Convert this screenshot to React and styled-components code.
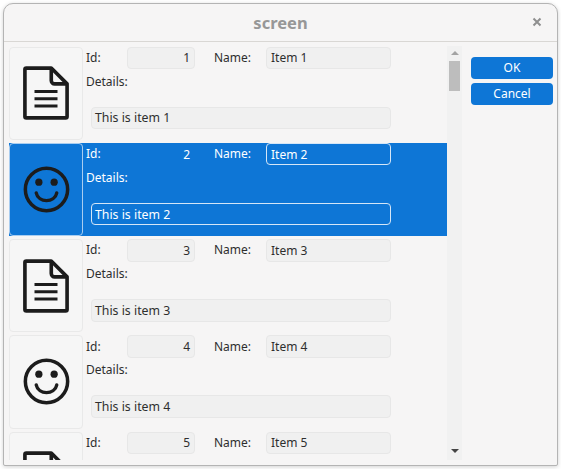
import styled, { createGlobalStyle } from "styled-components";

const GlobalStyle = createGlobalStyle`
  html, body {
    margin: 0;
    background: #ffffff;
  }
  body {
    font-family: "Noto Sans", sans-serif;
    font-size: 12px;
    color: #2e2e2e;
  }
`;

const Page = styled.div`
  width: 561px;
  height: 469px;
  padding: 3px;
  box-sizing: border-box;
  overflow: hidden;
`;

const Win = styled.div`
  width: 555px;
  height: 463px;
  box-sizing: border-box;
  border: 1px solid #b4b4b4;
  border-radius: 10px 10px 2px 2px;
  background: #f6f5f5;
  box-shadow: 0 1px 4px rgba(0, 0, 0, 0.18);
  display: flex;
  flex-direction: column;
  overflow: hidden;
`;

const TitleBar = styled.div`
  height: 37px;
  flex: none;
  position: relative;
  display: flex;
  align-items: center;
  justify-content: center;
  border-bottom: 1px solid #d9d7d4;
`;

const Title = styled.span`
  font-size: 16.5px;
  font-weight: 700;
  color: #979797;
`;

const CloseBtn = styled.svg`
  position: absolute;
  right: 15px;
  top: 13px;
  width: 10px;
  height: 10px;
`;

const Body = styled.div`
  flex: 1;
  min-height: 0;
  display: flex;
  padding: 4px 0 5px 5px;
`;

const List = styled.div`
  width: 438px;
  flex: none;
  overflow: hidden;
  padding-top: 0.5px;
  display: flex;
  flex-direction: column;
  gap: 3px;
`;

const Row = styled.div`
  height: 93.25px;
  flex: none;
  display: flex;
  background: ${(p) => (p.$selected ? "#0e76d6" : "transparent")};
  color: ${(p) => (p.$selected ? "#ffffff" : "#2e2e2e")};
`;

const Thumb = styled.div`
  width: 74px;
  flex: none;
  box-sizing: border-box;
  display: flex;
  align-items: center;
  justify-content: center;
  border: 1px solid ${(p) => (p.$selected ? "#a9cdf0" : "#e9e9e9")};
  border-radius: 4px;
  background: ${(p) => (p.$selected ? "#0e76d6" : "#f6f6f6")};
`;

const Fields = styled.div`
  margin-left: 3px;
  display: grid;
  grid-template-columns: 41px 68px 71px 125px;
  grid-template-rows: 22.5px 25px 12.5px 22.5px;
  align-content: start;
`;

const Label = styled.div`
  display: flex;
  align-items: center;
  line-height: 1;
  ${(p) => p.$name && "padding-left: 19px;"}
`;

const Field = styled.div`
  box-sizing: border-box;
  height: 22.5px;
  padding: 0 4px;
  display: flex;
  align-items: center;
  border-radius: 4px;
  white-space: nowrap;
  justify-content: ${(p) => (p.$right ? "flex-end" : "flex-start")};
  border: 1px solid
    ${(p) => (p.$selected ? (p.$plain ? "transparent" : "#d5e6f7") : "#e7e7e7")};
  background: ${(p) => (p.$selected ? "transparent" : "#f0f0f0")};
`;

const DetailsLabel = styled(Label)`
  grid-column: 1 / 3;
  grid-row: 2;
`;

const DetailsField = styled(Field)`
  grid-column: 1 / 5;
  grid-row: 4;
  margin-left: 5px;
  padding-left: 3px;
  font-size: 12.3px;
`;

const Track = styled.div`
  width: 15px;
  flex: none;
  background: #f1f1f1;
  display: flex;
  flex-direction: column;
  align-items: center;
`;

const ArrowUp = styled.div`
  margin-top: 5px;
  width: 0;
  height: 0;
  border-left: 4px solid transparent;
  border-right: 4px solid transparent;
  border-bottom: 4px solid #a3a3a3;
`;

const ArrowDown = styled.div`
  margin-top: auto;
  margin-bottom: 7px;
  width: 0;
  height: 0;
  border-left: 4px solid transparent;
  border-right: 4px solid transparent;
  border-top: 4px solid #444444;
`;

const ScrollHandle = styled.div`
  margin-top: 6px;
  width: 11px;
  height: 30px;
  background: #bdbdbd;
`;

const Side = styled.div`
  margin-left: 9px;
  padding-top: 11px;
  width: 82px;
  display: flex;
  flex-direction: column;
  gap: 4px;
`;

const Button = styled.button`
  height: 22px;
  padding: 0 0 2px;
  border: none;
  border-radius: 4px;
  background: #0e76d6;
  color: #ffffff;
  font: inherit;
  font-size: 12px;
`;

function DocIcon() {
  return (
    <svg width="46" height="54" viewBox="0 0 48 56" fill="none" stroke="#1c1c1c">
      <path
        d="M29.5 2H3.5a1.5 1.5 0 0 0-1.5 1.5v49a1.5 1.5 0 0 0 1.5 1.5h41a1.5 1.5 0 0 0 1.5-1.5V18.5Z"
        strokeWidth="3.8"
        strokeLinejoin="round"
      />
      <path d="M29.5 2V15a3.5 3.5 0 0 0 3.5 3.5h13" strokeWidth="3.8" strokeLinejoin="round" />
      <path d="M12 26.5H36M12 34H36M12 41.5H36" strokeWidth="3.2" />
    </svg>
  );
}

function SmileIcon() {
  return (
    <svg width="47" height="47" viewBox="0 0 48 48" fill="none" stroke="#1c1c1c">
      <circle cx="24" cy="24" r="21.6" strokeWidth="3.6" />
      <circle cx="16.2" cy="16.5" r="3.7" fill="#1c1c1c" stroke="none" />
      <circle cx="31.8" cy="16.5" r="3.7" fill="#1c1c1c" stroke="none" />
      <path d="M13.5 27.5C15.5 38 32.5 38 34.5 27.5" strokeWidth="3.4" strokeLinecap="round" />
    </svg>
  );
}

const items = [1, 2, 3, 4, 5];

function ItemRow({ id, selected }) {
  return (
    <Row $selected={selected}>
      <Thumb $selected={selected}>{id % 2 ? <DocIcon /> : <SmileIcon />}</Thumb>
      <Fields>
        <Label>Id:</Label>
        <Field $right $plain $selected={selected}>{id}</Field>
        <Label $name>Name:</Label>
        <Field $selected={selected}>Item {id}</Field>
        <DetailsLabel>Details:</DetailsLabel>
        <DetailsField $selected={selected}>This is item {id}</DetailsField>
      </Fields>
    </Row>
  );
}

export default function App() {
  return (
    <Page>
      <GlobalStyle />
      <Win>
        <TitleBar>
          <Title>screen</Title>
          <CloseBtn viewBox="0 0 10 10">
            <path d="M1.5 1.5L8.5 8.5M8.5 1.5L1.5 8.5" stroke="#8f8f8f" strokeWidth="2" />
          </CloseBtn>
        </TitleBar>
        <Body>
          <List>
            {items.map((id) => (
              <ItemRow key={id} id={id} selected={id === 2} />
            ))}
          </List>
          <Track>
            <ArrowUp />
            <ScrollHandle />
            <ArrowDown />
          </Track>
          <Side>
            <Button>OK</Button>
            <Button>Cancel</Button>
          </Side>
        </Body>
      </Win>
    </Page>
  );
}
